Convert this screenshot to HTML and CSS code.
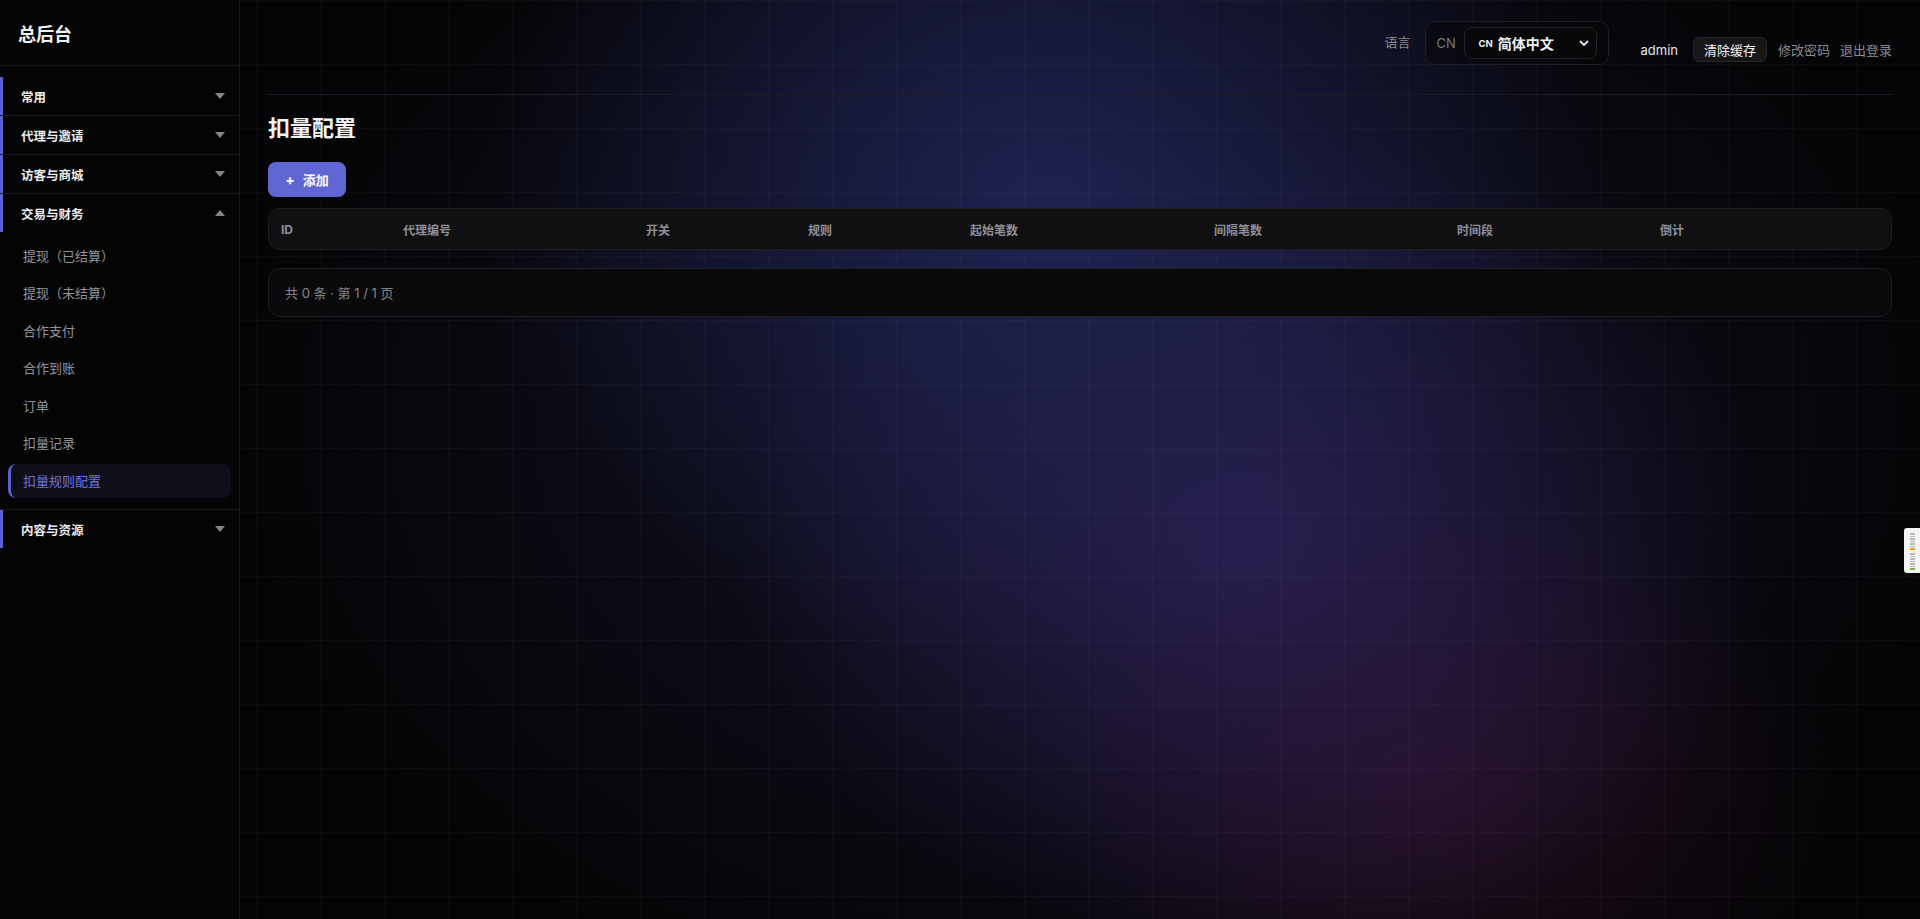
FILE: index.html
```html
<!DOCTYPE html>
<html lang="zh-CN">
<head>
  <meta charset="UTF-8">
  <meta name="viewport" content="width=device-width, initial-scale=1.0">
  <title>扣量配置 - 总后台</title>
  <link rel="stylesheet" href="styles.css">
</head>
<body>
  <div class="layout">
    <aside class="sidebar">
      <div class="brand">总后台</div>
      <nav class="nav">
        <div class="group">
          <div class="group-head"><span>常用</span><i class="caret"></i></div>
        </div>
        <div class="group">
          <div class="group-head"><span>代理与邀请</span><i class="caret"></i></div>
        </div>
        <div class="group">
          <div class="group-head"><span>访客与商城</span><i class="caret"></i></div>
        </div>
        <div class="group open">
          <div class="group-head"><span>交易与财务</span><i class="caret up"></i></div>
          <ul class="submenu">
            <li>提现（已结算）</li>
            <li>提现（未结算）</li>
            <li>合作支付</li>
            <li>合作到账</li>
            <li>订单</li>
            <li>扣量记录</li>
            <li class="active">扣量规则配置</li>
          </ul>
        </div>
        <div class="group">
          <div class="group-head"><span>内容与资源</span><i class="caret"></i></div>
        </div>
      </nav>
    </aside>

    <main class="main">
      <header class="topbar">
        <div class="lang">
          <span class="lang-label">语言</span>
          <div class="lang-box">
            <span class="lang-code">CN</span>
            <div class="lang-select">
              <span class="flag">CN</span>
              <span class="lang-name">简体中文</span>
              <svg class="chev" width="10" height="7" viewBox="0 0 10 7"><path d="M1.5 1.5 5 5l3.5-3.5" fill="none" stroke="#e6e6ea" stroke-width="1.8" stroke-linecap="round" stroke-linejoin="round"/></svg>
            </div>
          </div>
        </div>
        <div class="user">
          <span class="user-name">admin</span>
          <button class="btn-ghost">清除缓存</button>
          <a class="link">修改密码</a>
          <a class="link">退出登录</a>
        </div>
      </header>

      <h1 class="page-title">扣量配置</h1>
      <button class="btn-primary"><span class="plus">+</span>添加</button>

      <div class="table">
        <div class="thead">
          <div>ID</div>
          <div>代理编号</div>
          <div>开关</div>
          <div>规则</div>
          <div>起始笔数</div>
          <div>间隔笔数</div>
          <div>时间段</div>
          <div>倒计</div>
        </div>
      </div>

      <div class="pager">共 0 条 · 第 1 / 1 页</div>
    </main>
  </div>

  <div class="side-tab">
    <i></i><i></i><i></i><i></i><i></i><i></i><i class="o"></i>
    <i class="gap"></i><i></i><i></i><i></i><i></i><i></i><i></i><i class="g"></i>
  </div>
</body>
</html>
```

FILE: styles.css
```css
* {
  box-sizing: border-box;
}
html, body {
  margin: 0;
  height: 100%;
  overflow: hidden;
}
body {
  font-family: Inter, "Noto Sans CJK SC", sans-serif;
  color: #e6e6ea;
  background:
    linear-gradient(rgba(255, 255, 255, 0.026) 1px, transparent 1px) 0 0 / 64px 64px,
    linear-gradient(90deg, rgba(255, 255, 255, 0.026) 1px, transparent 1px) 0 0 / 64px 64px,
    radial-gradient(ellipse 780px 660px at 1040px 200px, rgba(31, 36, 84, 0.92), transparent 72%),
    radial-gradient(ellipse 720px 580px at 1250px 540px, rgba(44, 32, 84, 0.88), transparent 72%),
    radial-gradient(ellipse 560px 420px at 1430px 780px, rgba(56, 18, 46, 0.6), transparent 72%),
    radial-gradient(ellipse 1100px 800px at 1100px 420px, rgba(26, 26, 56, 0.65), transparent 78%),
    #050507;
}
.layout {
  display: flex;
  height: 100vh;
}

/* sidebar */
.sidebar {
  width: 240px;
  flex-shrink: 0;
  background: #040405;
  border-right: 1px solid #1a1a1d;
}
.brand {
  height: 66px;
  padding: 0 18px;
  display: flex;
  align-items: center;
  font-size: 18px;
  font-weight: 700;
  color: #f2f2f4;
  border-bottom: 1px solid #19191c;
}
.nav {
  padding-top: 11px;
}
.group {
  border-bottom: 1px solid #19191c;
}
.group:last-child {
  border-bottom: 0;
}
.group-head {
  height: 38px;
  display: flex;
  align-items: center;
  justify-content: space-between;
  padding: 0 14px 0 18px;
  border-left: 3px solid #5d61d2;
  font-size: 12.5px;
  font-weight: 700;
  color: #ececef;
}
.caret {
  width: 0;
  height: 0;
  border-left: 5px solid transparent;
  border-right: 5px solid transparent;
  border-top: 6px solid #84848c;
}
.caret.up {
  border-top: 0;
  border-bottom: 6px solid #84848c;
}
.submenu {
  list-style: none;
  margin: 0;
  padding: 6px 8px 8px;
}
.submenu li {
  height: 34px;
  margin-bottom: 3.6px;
  display: flex;
  align-items: center;
  padding-left: 15px;
  font-size: 13px;
  color: #93939b;
  border-radius: 8px;
}
.submenu li.active {
  background: #0f0f1a;
  border-left: 3px solid #5d61d2;
  padding-left: 12px;
  color: #6f73e2;
}

/* main */
.main {
  flex: 1;
  padding: 0 28px;
  min-width: 0;
}
.topbar {
  height: 95px;
  display: flex;
  justify-content: flex-end;
  align-items: flex-start;
  padding-top: 21px;
  border-bottom: 1px solid #1c1c22;
}
.lang {
  display: flex;
  align-items: center;
  height: 44px;
}
.lang-label {
  font-size: 13px;
  color: #8b8b93;
  margin-right: 15px;
  margin-top: -4px;
}
.lang-box {
  width: 184px;
  height: 44px;
  display: flex;
  align-items: center;
  padding: 0 11px 0 10px;
  border: 1px solid #1f1f25;
  border-radius: 10px;
  background: rgba(8, 8, 10, 0.55);
}
.lang-code {
  font-size: 13px;
  color: #7b7b83;
  width: 28px;
}
.lang-select {
  flex: 1;
  height: 32px;
  display: flex;
  align-items: center;
  padding: 0 7px 0 13px;
  border: 1px solid #212127;
  border-radius: 8px;
  background: #08080a;
}
.flag {
  font-size: 9.5px;
  font-weight: 700;
  color: #f0f0f2;
  margin-right: 5px;
}
.lang-name {
  font-size: 14px;
  font-weight: 700;
  color: #f0f0f2;
  flex: 1;
}
.user {
  display: flex;
  align-items: center;
  height: 25px;
  margin-top: 16px;
  margin-left: 31px;
  font-size: 13px;
}
.user-name {
  color: #e4e4e8;
  margin-right: 15px;
}
.btn-ghost {
  height: 25px;
  width: 74px;
  padding: 0;
  font: inherit;
  color: #f2f2f4;
  background: #17171a;
  border: 1px solid #26262b;
  border-radius: 6px;
  margin-right: 11px;
}
.link {
  color: #8b8b93;
  margin-right: 10px;
}
.link:last-child {
  margin-right: 0;
}

.page-title {
  margin: 18px 0 0;
  font-size: 22px;
  line-height: 30px;
  font-weight: 700;
  color: #f2f2f4;
}
.btn-primary {
  margin-top: 19px;
  width: 78px;
  height: 35px;
  padding: 0;
  border: 0;
  border-radius: 8px;
  background: #6067d4;
  color: #fff;
  font-family: inherit;
  font-size: 13px;
  font-weight: 700;
  display: flex;
  align-items: center;
  justify-content: center;
}
.plus {
  font-size: 14px;
  margin-right: 8px;
}
.table {
  margin-top: 11px;
  border: 1px solid #1f1f23;
  border-radius: 12px;
  background: #101012;
}
.thead {
  height: 40px;
  display: grid;
  grid-template-columns: 122px 243px 162px 162px 244px 243px 203px 1fr;
  align-items: center;
  padding-left: 12px;
  font-size: 12px;
  font-weight: 700;
  color: #8f8f97;
}
.pager {
  margin-top: 18px;
  height: 49px;
  display: flex;
  align-items: center;
  padding-left: 16px;
  border: 1px solid #1f1f23;
  border-radius: 12px;
  background: #0a0a0c;
  font-size: 13px;
  color: #85858d;
}

/* floating tab on right edge */
.side-tab {
  position: fixed;
  right: 0;
  top: 528px;
  width: 16px;
  height: 45px;
  background: #f4f4f4;
  border-radius: 3px 0 0 3px;
  display: flex;
  flex-direction: column;
  align-items: center;
  padding-top: 5px;
  gap: 1px;
}
.side-tab i {
  display: block;
  width: 5px;
  height: 1.5px;
  background: #b8b8b8;
}
.side-tab i.o {
  background: #f39a1d;
}
.side-tab i.g {
  background: #7bb33a;
}
.side-tab i.gap {
  background: transparent;
}
```
